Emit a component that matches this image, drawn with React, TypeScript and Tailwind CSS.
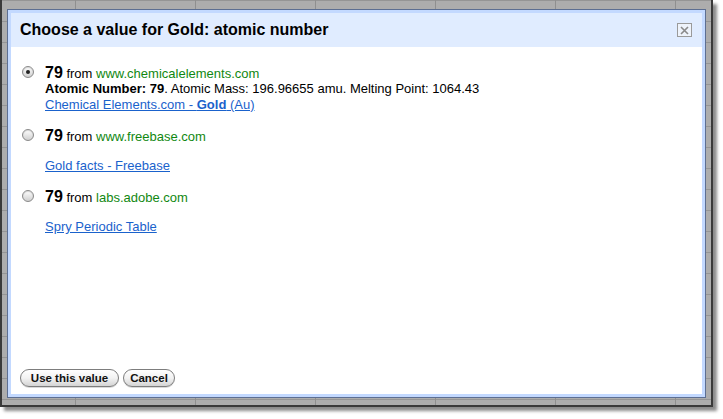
import React from 'react';

type Source = {
  domain: string;
  detail?: React.ReactNode;
  link: React.ReactNode;
  selected?: boolean;
};

const sources: Source[] = [
  {
    domain: 'www.chemicalelements.com',
    selected: true,
    detail: (
      <>
        <b>Atomic Number: 79</b>. Atomic Mass: 196.96655 amu. Melting Point: 1064.43
      </>
    ),
    link: (
      <>
        Chemical Elements.com - <b>Gold</b> (Au)
      </>
    ),
  },
  { domain: 'www.freebase.com', link: 'Gold facts - Freebase' },
  { domain: 'labs.adobe.com', link: 'Spry Periodic Table' },
];

function Radio({ checked }: { checked?: boolean }) {
  return (
    <span className="ml-[2px] mt-[2px] flex h-[12px] w-[12px] shrink-0 items-center justify-center rounded-full border border-[#8a8a8a] bg-gradient-to-b from-[#ffffff] to-[#cfcfcf] shadow-[inset_0_1px_1px_rgba(0,0,0,0.15)]">
      {checked && <span className="h-[4px] w-[4px] rounded-full bg-[#222]" />}
    </span>
  );
}

function PillButton({ children, className = '' }: { children: React.ReactNode; className?: string }) {
  return (
    <button
      className={`h-[18px] rounded-full border border-[#7d7d7d] bg-gradient-to-b from-[#ffffff] via-[#f2f2f2] to-[#d4d4d4] text-[11.5px] font-bold leading-[16px] text-[#111] shadow-[0_1px_0_rgba(0,0,0,0.15)] ${className}`}
    >
      {children}
    </button>
  );
}

export default function App() {
  return (
    <div className="h-[419px] w-[723px] overflow-hidden bg-white font-['Liberation_Sans',Arial,sans-serif]">
      <div className="relative h-[407px] w-[713px] border-x-2 border-b-2 border-[#3a3a3a] bg-[#adadad] [background-image:linear-gradient(to_right,#8f8f8f_1px,transparent_1px),linear-gradient(to_bottom,#959595_1px,transparent_1px)] [background-position:73px_0] [background-size:120px_21px] shadow-[4px_4px_3px_rgba(0,0,0,0.45)]">
        <div className="absolute left-[5px] top-[9px] flex h-[389px] w-[699px] flex-col border border-[#5d6f92] bg-[#c3d9ff] p-[3px]">
          <div className="flex h-[34px] shrink-0 items-center justify-between bg-[#e0ecff] pl-[9px] pr-[10px]">
            <h1 className="-mt-[1px] text-[16px] font-bold text-black">Choose a value for Gold: atomic number</h1>
            <button className="flex h-[14px] w-[15px] items-center justify-center border border-[#9a9a9a] bg-[#eef3fb]">
              <svg width="9" height="9" viewBox="0 0 9 9">
                <path d="M1 1 L8 8 M8 1 L1 8" stroke="#8a8a8a" strokeWidth="1.6" />
              </svg>
            </button>
          </div>

          <div className="flex flex-1 flex-col justify-between bg-white pb-[7px] pl-[9px] pt-[17px]">
            <div className="flex flex-col gap-[14px]">
              {sources.map((s) => (
                <div key={s.domain} className="flex gap-[11px]">
                  <Radio checked={s.selected} />
                  <div className="flex flex-col">
                    <div className="h-[17px] text-[13px] leading-[17px] text-black">
                      <span className="text-[16px] font-bold">79</span> from{' '}
                      <span className="text-[#118811]">{s.domain}</span>
                    </div>
                    {s.detail ? (
                      <div className="text-[13px] leading-[16px] text-black">{s.detail}</div>
                    ) : (
                      <div className="h-[14px]" />
                    )}
                    <a href="#" className="text-[13px] leading-[16px] text-[#1a62cc] underline">
                      {s.link}
                    </a>
                  </div>
                </div>
              ))}
            </div>

            <div className="flex gap-[4px]">
              <PillButton className="w-[99px]">Use this value</PillButton>
              <PillButton className="w-[52px]">Cancel</PillButton>
            </div>
          </div>
        </div>
      </div>
    </div>
  );
}
